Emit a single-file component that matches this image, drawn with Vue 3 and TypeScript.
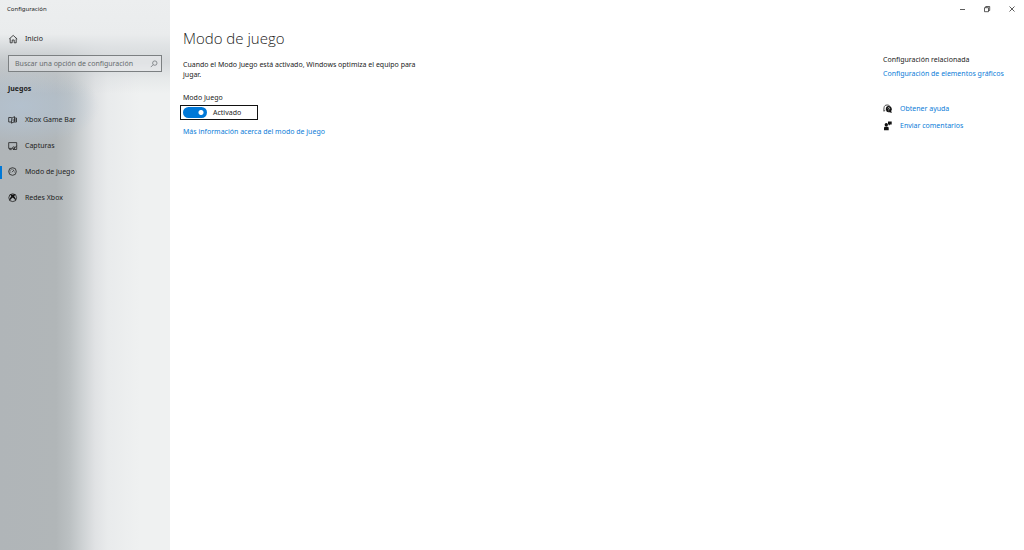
<script setup lang="ts">
import { ref } from 'vue'

type NavIcon = 'gamebar' | 'captures' | 'gauge' | 'xbox'

interface NavItem {
  label: string
  icon: NavIcon
}

const navItems: NavItem[] = [
  { label: 'Xbox Game Bar', icon: 'gamebar' },
  { label: 'Capturas', icon: 'captures' },
  { label: 'Modo de juego', icon: 'gauge' },
  { label: 'Redes Xbox', icon: 'xbox' },
]

const current = ref('Modo de juego')
const search = ref('')
const gameMode = ref(true)
</script>

<template>
  <div class="window">
    <aside class="sidebar">
      <div class="app-title">Configuración</div>
      <a class="home" href="#">
        <svg class="icon" viewBox="0 0 10 10" aria-hidden="true">
          <path d="M1.2 5 5.2 1.4 9.2 5M2.2 4.4V8.8h2V6h2v2.8h2V4.4" />
        </svg>
        <span>Inicio</span>
      </a>
      <div class="search">
        <input v-model="search" type="text" aria-label="Buscar una opción de configuración" placeholder="Buscar una opción de configuración" />
        <svg class="search-icon" viewBox="0 0 8 8" aria-hidden="true">
          <circle cx="4.8" cy="3.1" r="2.2" />
          <path d="M3.2 4.7.8 7.1" />
        </svg>
      </div>
      <h2>Juegos</h2>
      <nav>
        <a
          v-for="item in navItems"
          :key="item.label"
          href="#"
          class="nav-item"
          :class="{ active: item.label === current }"
          @click.prevent="current = item.label"
        >
          <svg class="icon" viewBox="0 0 10 10" aria-hidden="true">
            <template v-if="item.icon === 'gamebar'">
              <path d="M3.800 2.500H.7v4.500h2.500M3.400 8.200 3.800 3.200 6.500 1.600v5zM6.500 3h2v4H5.600M4.500 5h3.700" />
            </template>
            <template v-else-if="item.icon === 'captures'">
              <path d="M4.500 7.400H.7V1.600h8v6.800M1.700 7.400v1.200h2M5.200 8.500 8.700 4.800M5 8.500h3.700" />
              <circle cx="5.700" cy="6.900" r="1.100" />
            </template>
            <template v-else-if="item.icon === 'gauge'">
              <circle cx="4.500" cy="4.500" r="3.800" />
              <path class="thin" d="M2.400 5.700a2.300 2.300 0 0 1 3-3.300M6.700 4a2.300 2.300 0 0 1-.1 1.700" />
              <path d="M4 5.200 6.100 3" />
            </template>
            <template v-else>
              <circle cx="4.700" cy="4.700" r="3.900" />
              <path class="solid" d="M1.900 1.600C3 .9 3.900 1.300 4.700 1.800c.8-.5 1.700-.9 2.800-.2L6.100 3.200C7.500 4.700 8.200 6.200 7.700 7.800 7 6.400 6 5.300 4.700 4.400 3.400 5.300 2.400 6.400 1.700 7.800 1.200 6.200 1.900 4.700 3.300 3.200z" />
            </template>
          </svg>
          <span>{{ item.label }}</span>
        </a>
      </nav>
    </aside>

    <div class="body">
      <div class="window-controls">
        <button type="button" aria-label="Minimizar">
          <svg viewBox="0 0 8 8"><path d="M2 4.500h5" /></svg>
        </button>
        <button type="button" aria-label="Restaurar">
          <svg viewBox="0 0 8 8"><path d="M1.500 2.700h4v4h-4zM2.700 2.700V1.500h4v4H5.500" /></svg>
        </button>
        <button type="button" aria-label="Cerrar">
          <svg viewBox="0 0 8 8"><path d="m1.500 1.500 5 5M6.500 1.500l-5 5" /></svg>
        </button>
      </div>

      <div class="content">
        <main>
          <h1>Modo de juego</h1>
          <p>Cuando el Modo Juego está activado, Windows optimiza el equipo para jugar.</p>
          <div id="mode-label" class="setting-label">Modo Juego</div>
          <label class="toggle">
            <input v-model="gameMode" type="checkbox" role="switch" aria-labelledby="mode-label" />
            <span>{{ gameMode ? 'Activado' : 'Desactivado' }}</span>
          </label>
          <a class="link" href="#">Más información acerca del modo de juego</a>
        </main>

        <aside class="related">
          <h3>Configuración relacionada</h3>
          <a class="link" href="#">Configuración de elementos gráficos</a>
          <div class="support">
            <a class="link" href="#">
              <svg class="icon" viewBox="0 0 10 10" aria-hidden="true">
                <path d="M2.300 6.300.8 7.200 1 3.800C1.200 1.800 2.400 1 4 1c1.500 0 2.500.5 3 1.400" />
                <path class="solid" d="M5.700 2.100a3.100 3.100 0 0 1 2.500 5l.6 2-2.100-.9A3.100 3.100 0 1 1 5.700 2.100z" />
                <path class="mark" d="M4.800 4.400c.1-1.200 2-1 1.800.1-.1.600-.9.600-.9 1.300M5.700 6.600v.6" />
              </svg>
              <span>Obtener ayuda</span>
            </a>
            <a class="link" href="#">
              <svg class="icon" viewBox="0 0 10 10" aria-hidden="true">
                <path class="solid" d="M5 .6h3.700v3H7L5.900 4.700V3.600H5zM3.300 2a1.700 1.700 0 1 1 0 3.400 1.700 1.700 0 0 1 0-3.400zM1 9.200V7.200C1 6.300 1.600 5.800 2.400 5.800h2c.8 0 1.300.5 1.300 1.400v2z" />
              </svg>
              <span>Enviar comentarios</span>
            </a>
          </div>
        </aside>
      </div>
    </div>
  </div>
</template>

<style>
body {
  margin: 0;
  background: #fff;
}
</style>

<style scoped>
.window {
  display: flex;
  min-height: 100vh;
  font: 7px/10px "Noto Sans", "Open Sans", sans-serif;
  color: #222;
}

a {
  color: inherit;
  text-decoration: none;
}

h1,
h2,
h3,
p {
  margin: 0;
}

.sidebar {
  flex: 0 0 170px;
  box-sizing: border-box;
  background:
    linear-gradient(180deg, #eceeef 0, #eaeced 34px, rgba(222, 225, 227, 0.9) 46px, rgba(204, 208, 211, 0.7) 62px, rgba(210, 214, 217, 0.3) 78px, transparent 94px),
    radial-gradient(ellipse 80px 40px at 20px 106px, rgba(181, 197, 213, 0.75) 0, rgba(181, 197, 213, 0.5) 50%, transparent 100%),
    linear-gradient(90deg, #b0b5b8 0, #b1b6b8 56px, #bcc1c3 70px, #d0d4d6 84px, #e0e2e4 95px, #e9ebec 108px, #eff1f1 140px, #eff1f1 100%);
}

.app-title {
  padding: 4px 7px 0;
  font-size: 6px;
}

.home {
  display: flex;
  align-items: center;
  gap: 7px;
  height: 20px;
  margin-top: 15px;
  padding-left: 8px;
}

.icon {
  flex: none;
  width: 10px;
  height: 10px;
  fill: none;
  stroke: #222;
  stroke-width: 0.8;
}

.icon .thin {
  stroke-width: 0.4;
}

.icon .solid {
  fill: #111;
  stroke: none;
}

.icon .mark {
  stroke: #fff;
  stroke-width: 0.7;
}

.search {
  display: flex;
  align-items: center;
  box-sizing: border-box;
  height: 17px;
  margin: 6px 8px 0;
  padding: 0 3px 0 6px;
  border: 1px solid #7c8082;
  background: rgba(240, 241, 242, 0.4);
}

.search input {
  flex: 1;
  min-width: 0;
  padding: 0;
  border: 0;
  outline: 0;
  background: transparent;
  font: inherit;
  color: #222;
}

.search input::placeholder {
  color: #666b6e;
  opacity: 1;
}

.search-icon {
  width: 8px;
  height: 8px;
  fill: none;
  stroke: #74797c;
  stroke-width: 0.8;
}

h2 {
  margin: 12px 0 0 8px;
  font-size: 7px;
  line-height: 10px;
  font-weight: 700;
}

nav {
  margin-top: 13px;
}

.nav-item {
  display: flex;
  align-items: center;
  gap: 7px;
  box-sizing: border-box;
  height: 26px;
  padding-left: 8px;
  background: linear-gradient(#0078d7, #0078d7) no-repeat -2px center / 2px 13px;
}

.nav-item.active {
  background-position: 0 center;
}

.body {
  flex: 1;
  min-width: 0;
}

.window-controls {
  display: flex;
  justify-content: flex-end;
  height: 18px;
}

.window-controls button {
  display: grid;
  place-items: center;
  width: 25px;
  padding: 0;
  border: 0;
  background: transparent;
}

.window-controls svg {
  width: 8px;
  height: 8px;
  fill: none;
  stroke: #333;
  stroke-width: 0.8;
}

.content {
  display: flex;
  justify-content: space-between;
  padding: 10px 12px 0 13px;
}

main {
  flex: 0 1 246px;
}

h1 {
  font-family: "Open Sans", "Noto Sans", sans-serif;
  font-size: 15px;
  line-height: 20px;
  font-weight: 300;
}

p {
  margin-top: 12px;
}

.setting-label {
  margin-top: 13px;
}

.toggle {
  display: flex;
  align-items: center;
  gap: 6px;
  box-sizing: border-box;
  width: 78px;
  height: 15px;
  margin: 2px 0 7px -3px;
  padding-left: 2px;
  border: 1px solid #111;
}

.toggle input {
  appearance: none;
  width: 24px;
  height: 11px;
  margin: 0;
  border-radius: 6px;
  background: radial-gradient(circle at 18px 50%, #fff 2px, transparent 3px) #0078d7;
}

.toggle input:not(:checked) {
  background: radial-gradient(circle at 6px 50%, #fff 2px, transparent 3px) #777;
}

.link {
  color: #0a7cd8;
}

.related {
  flex: 0 0 129px;
  padding-top: 27px;
}

h3 {
  margin-bottom: 4px;
  font-size: 7px;
  line-height: 10px;
  font-weight: 400;
}

.support {
  display: grid;
  gap: 7px;
  margin-top: 25px;
}

.support .link {
  display: flex;
  align-items: center;
  gap: 7px;
}
</style>
